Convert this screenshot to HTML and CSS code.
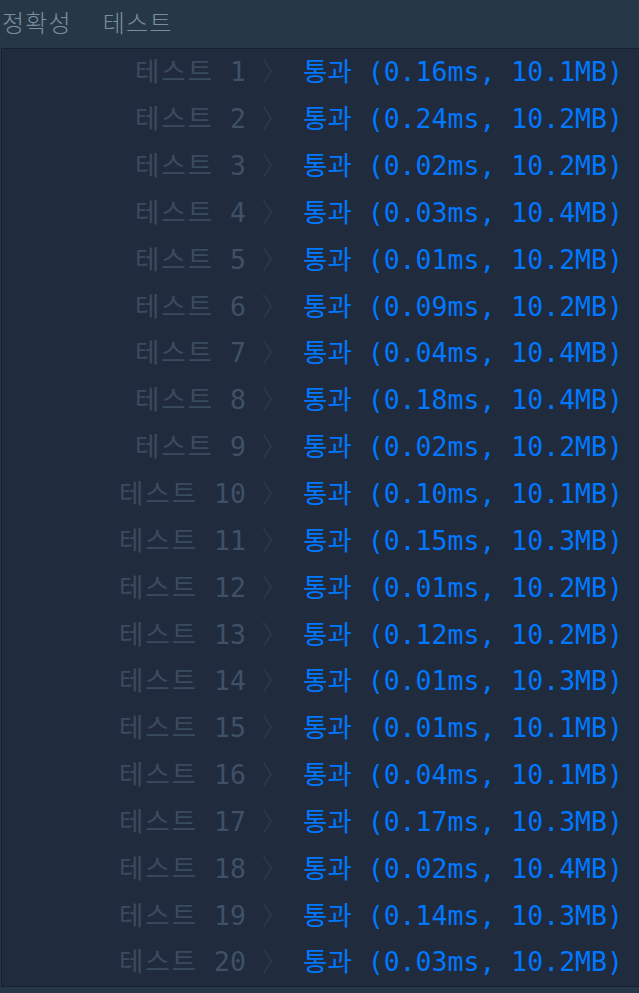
FILE: index.html
```html
<!DOCTYPE html>
<html lang="ko">

<head>
    <meta charset="UTF-8">
    <meta name="viewport" content="width=device-width, initial-scale=1.0">
    <title>채점 결과</title>
    <link rel="stylesheet" href="styles.css">
</head>

<body>
    <div class="tabs">
        <span class="tab">정확성</span>
        <span class="tab">테스트</span>
    </div>

    <main class="console">
        <table class="results">
            <tbody>
                <tr><td class="name"><span class="ko">테스트</span> 1</td><td class="arrow">〉</td><td class="pass">통과 (0.16ms, 10.1MB)</td></tr>
                <tr><td class="name"><span class="ko">테스트</span> 2</td><td class="arrow">〉</td><td class="pass">통과 (0.24ms, 10.2MB)</td></tr>
                <tr><td class="name"><span class="ko">테스트</span> 3</td><td class="arrow">〉</td><td class="pass">통과 (0.02ms, 10.2MB)</td></tr>
                <tr><td class="name"><span class="ko">테스트</span> 4</td><td class="arrow">〉</td><td class="pass">통과 (0.03ms, 10.4MB)</td></tr>
                <tr><td class="name"><span class="ko">테스트</span> 5</td><td class="arrow">〉</td><td class="pass">통과 (0.01ms, 10.2MB)</td></tr>
                <tr><td class="name"><span class="ko">테스트</span> 6</td><td class="arrow">〉</td><td class="pass">통과 (0.09ms, 10.2MB)</td></tr>
                <tr><td class="name"><span class="ko">테스트</span> 7</td><td class="arrow">〉</td><td class="pass">통과 (0.04ms, 10.4MB)</td></tr>
                <tr><td class="name"><span class="ko">테스트</span> 8</td><td class="arrow">〉</td><td class="pass">통과 (0.18ms, 10.4MB)</td></tr>
                <tr><td class="name"><span class="ko">테스트</span> 9</td><td class="arrow">〉</td><td class="pass">통과 (0.02ms, 10.2MB)</td></tr>
                <tr><td class="name"><span class="ko">테스트</span> 10</td><td class="arrow">〉</td><td class="pass">통과 (0.10ms, 10.1MB)</td></tr>
                <tr><td class="name"><span class="ko">테스트</span> 11</td><td class="arrow">〉</td><td class="pass">통과 (0.15ms, 10.3MB)</td></tr>
                <tr><td class="name"><span class="ko">테스트</span> 12</td><td class="arrow">〉</td><td class="pass">통과 (0.01ms, 10.2MB)</td></tr>
                <tr><td class="name"><span class="ko">테스트</span> 13</td><td class="arrow">〉</td><td class="pass">통과 (0.12ms, 10.2MB)</td></tr>
                <tr><td class="name"><span class="ko">테스트</span> 14</td><td class="arrow">〉</td><td class="pass">통과 (0.01ms, 10.3MB)</td></tr>
                <tr><td class="name"><span class="ko">테스트</span> 15</td><td class="arrow">〉</td><td class="pass">통과 (0.01ms, 10.1MB)</td></tr>
                <tr><td class="name"><span class="ko">테스트</span> 16</td><td class="arrow">〉</td><td class="pass">통과 (0.04ms, 10.1MB)</td></tr>
                <tr><td class="name"><span class="ko">테스트</span> 17</td><td class="arrow">〉</td><td class="pass">통과 (0.17ms, 10.3MB)</td></tr>
                <tr><td class="name"><span class="ko">테스트</span> 18</td><td class="arrow">〉</td><td class="pass">통과 (0.02ms, 10.4MB)</td></tr>
                <tr><td class="name"><span class="ko">테스트</span> 19</td><td class="arrow">〉</td><td class="pass">통과 (0.14ms, 10.3MB)</td></tr>
                <tr><td class="name"><span class="ko">테스트</span> 20</td><td class="arrow">〉</td><td class="pass">통과 (0.03ms, 10.2MB)</td></tr>
            </tbody>
        </table>
    </main>
</body>

</html>
```

FILE: styles.css
```css
body {
    margin: 0;
    background: #263747;
    font-family: "DejaVu Sans Mono", "Noto Sans CJK KR", monospace;
}

.tabs {
    height: 42px;
    padding: 0 0 6px 2px;
    display: flex;
    align-items: center;
    gap: 31px;
    font-family: "Noto Sans CJK KR", sans-serif;
    font-size: 24px;
    font-weight: 300;
    letter-spacing: 1.2px;
    color: #78909c;
}

.console {
    margin-left: 1px;
    background: #202b3d;
    border: 1px solid #172030;
    border-right: none;
    height: 937px;
}

.results {
    border-collapse: collapse;
    font-size: 26.5px;
}

.results td {
    height: 41.85px;
    padding: 0 0 5px;
    white-space: nowrap;
}

.name {
    width: 244px;
    text-align: right;
    color: #3f5166;
}

.ko {
    letter-spacing: 2px;
    color: #3a4b5f;
}

.arrow {
    width: 57px;
    text-align: center;
    color: #2a384b;
}

.pass {
    color: #0078ff;
}
```
